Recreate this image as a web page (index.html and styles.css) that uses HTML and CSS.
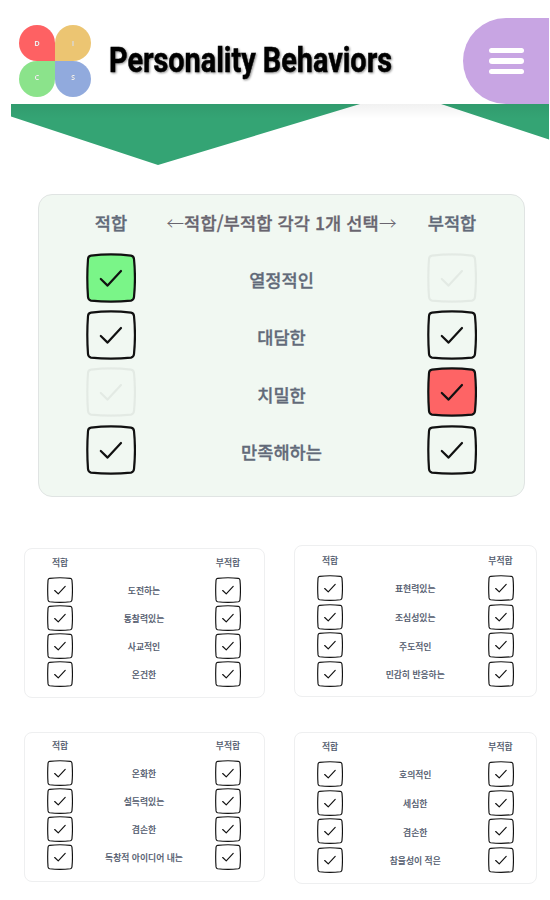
FILE: index.html
```html
<!DOCTYPE html>
<html lang="ko">
<head>
<meta charset="utf-8">
<title>Personality Behaviors</title>
<link rel="stylesheet" href="styles.css">
</head>
<body>
<svg class="defs" width="0" height="0" aria-hidden="true">
  <symbol id="box" viewBox="0 0 50 50">
    <path class="frame" d="M5 2.7Q25 .2 45 2.7Q47.6 3 48 6Q49.9 25 48 44Q47.7 47 45 47.6Q25 49.8 5 47.6Q2.3 47 2 44Q.6 25 2 6Q2.3 3 5 2.7Z"/>
    <path class="tick" d="M14.8 26L21.6 32.6L35 18"/>
  </symbol>
</svg>
<header class="header">
  <svg class="logo" viewBox="0 0 72 72">
    <path fill="#fe6163" d="M36 36H18A18 18 0 1 1 36 18Z"/>
    <path fill="#ecc572" d="M36 36V18A18 18 0 1 1 54 36Z"/>
    <path fill="#8be38b" d="M36 36V54A18 18 0 1 1 18 36Z"/>
    <path fill="#91aadd" d="M36 36H54A18 18 0 1 1 36 54Z"/>
    <g class="letters"><text x="18" y="21.2">D</text><text x="54" y="21.2">I</text><text x="18" y="55">C</text><text x="54" y="55">S</text></g>
  </svg>
  <svg class="title" viewBox="0 0 290 50"><text x="1" y="33" textLength="283" lengthAdjust="spacingAndGlyphs">Personality Behaviors</text></svg>
  <button class="menu" aria-label="Menu"><i></i><i></i><i></i></button>
</header>
<svg class="banner" viewBox="0 0 538 62">
  <defs><linearGradient id="fade" x2="0" y2="1"><stop stop-color="#000" stop-opacity=".055"/><stop offset="1" stop-color="#000" stop-opacity="0"/></linearGradient></defs>
  <path fill="#34a474" d="M0 0H349L147 61L0 12.5ZM430 0H538V35.5Z"/>
  <path fill="url(#fade)" d="M0 0H538V15H0Z"/>
</svg>
<main>
  <section class="card main">
    <div class="row head"><b>적합</b><b class="hint"><span class="arrow">←</span>적합/부적합 각각 1개 선택<span class="arrow">→</span></b><b>부적합</b></div>
    <div class="row"><svg class="box yes"><use href="#box"/></svg><b>열정적인</b><svg class="box off"><use href="#box"/></svg></div>
    <div class="row"><svg class="box"><use href="#box"/></svg><b>대담한</b><svg class="box"><use href="#box"/></svg></div>
    <div class="row"><svg class="box off"><use href="#box"/></svg><b>치밀한</b><svg class="box no"><use href="#box"/></svg></div>
    <div class="row"><svg class="box"><use href="#box"/></svg><b>만족해하는</b><svg class="box"><use href="#box"/></svg></div>
  </section>
  <div class="minis">
    <div class="column left">
      <section class="card mini">
        <div class="row head"><b>적합</b><b></b><b>부적합</b></div>
        <div class="row"><svg class="box"><use href="#box"/></svg><b>도전하는</b><svg class="box"><use href="#box"/></svg></div>
        <div class="row"><svg class="box"><use href="#box"/></svg><b>통찰력있는</b><svg class="box"><use href="#box"/></svg></div>
        <div class="row"><svg class="box"><use href="#box"/></svg><b>사교적인</b><svg class="box"><use href="#box"/></svg></div>
        <div class="row"><svg class="box"><use href="#box"/></svg><b>온건한</b><svg class="box"><use href="#box"/></svg></div>
      </section>
      <section class="card mini">
        <div class="row head"><b>적합</b><b></b><b>부적합</b></div>
        <div class="row"><svg class="box"><use href="#box"/></svg><b>온화한</b><svg class="box"><use href="#box"/></svg></div>
        <div class="row"><svg class="box"><use href="#box"/></svg><b>설득력있는</b><svg class="box"><use href="#box"/></svg></div>
        <div class="row"><svg class="box"><use href="#box"/></svg><b>겸손한</b><svg class="box"><use href="#box"/></svg></div>
        <div class="row"><svg class="box"><use href="#box"/></svg><b>독창적 아이디어 내는</b><svg class="box"><use href="#box"/></svg></div>
      </section>
    </div>
    <div class="column right">
      <section class="card mini">
        <div class="row head"><b>적합</b><b></b><b>부적합</b></div>
        <div class="row"><svg class="box"><use href="#box"/></svg><b>표현력있는</b><svg class="box"><use href="#box"/></svg></div>
        <div class="row"><svg class="box"><use href="#box"/></svg><b>조심성있는</b><svg class="box"><use href="#box"/></svg></div>
        <div class="row"><svg class="box"><use href="#box"/></svg><b>주도적인</b><svg class="box"><use href="#box"/></svg></div>
        <div class="row"><svg class="box"><use href="#box"/></svg><b>민감히 반응하는</b><svg class="box"><use href="#box"/></svg></div>
      </section>
      <section class="card mini">
        <div class="row head"><b>적합</b><b></b><b>부적합</b></div>
        <div class="row"><svg class="box"><use href="#box"/></svg><b>호의적인</b><svg class="box"><use href="#box"/></svg></div>
        <div class="row"><svg class="box"><use href="#box"/></svg><b>세심한</b><svg class="box"><use href="#box"/></svg></div>
        <div class="row"><svg class="box"><use href="#box"/></svg><b>겸손한</b><svg class="box"><use href="#box"/></svg></div>
        <div class="row"><svg class="box"><use href="#box"/></svg><b>참을성이 적은</b><svg class="box"><use href="#box"/></svg></div>
      </section>
    </div>
  </div>
</main>
</body>
</html>
```
FILE: styles.css
```css
* { box-sizing: border-box; }
body {
  margin: 0;
  width: 550px;
  height: 900px;
  overflow: hidden;
  background: #fff;
  font-family: "Noto Sans CJK KR", sans-serif;
  color: #626a79;
}
svg { display: block; }
.defs { position: absolute; }

.header {
  display: flex;
  align-items: flex-start;
  height: 104px;
  padding: 18px 1.5px 0 18.5px;
}
.logo { width: 72px; height: 72px; margin-top: 7px; flex: none; }
.letters {
  font: 700 7.5px "Open Sans", sans-serif;
  fill: #fff;
  fill-opacity: .9;
  text-anchor: middle;
  filter: drop-shadow(.6px .6px .4px rgba(0, 0, 0, .4));
}
.title { width: 290px; height: 50px; margin: 21px 0 0 17.5px; flex: none; overflow: visible; }
.title text {
  font: 700 35px Roboto, sans-serif;
  fill: #000;
  stroke: #000;
  stroke-width: .5px;
  filter: drop-shadow(1px 1px 1px rgba(0, 0, 0, .45));
}
.menu {
  display: flex;
  flex-direction: column;
  justify-content: center;
  gap: 5px;
  width: 86px;
  height: 86px;
  margin-left: auto;
  padding: 0 0 0 26px;
  border: 0;
  border-radius: 43px 0 0 43px;
  background: #c8a5e3;
}
.menu i { width: 35px; height: 5.5px; border-radius: 3px; background: #fff; }
.banner { width: 538px; height: 62px; margin-left: 11px; }

.card {
  display: flex;
  flex-direction: column;
  border: 1px solid #eeeff0;
  background: #fff;
}
.row {
  display: grid;
  align-items: center;
  justify-items: center;
  white-space: nowrap;
}
.row b { font-weight: 500; line-height: 1; -webkit-text-stroke: .3px currentColor; }
.box { overflow: visible; }
.frame { fill: var(--fill, none); stroke: #111; stroke-width: 2.2px; }
.tick { fill: none; stroke: #111; stroke-width: 2.2px; stroke-linecap: round; stroke-linejoin: round; }
.yes { --fill: #7af588; }
.no { --fill: #fe6465; }
.off { opacity: .055; }

.main {
  width: 487px;
  height: 303px;
  margin: 28px 0 0 38px;
  padding-top: 12px;
  border: 1.5px solid #e0e4e3;
  border-radius: 14px;
  background: #f1f8f2;
  font-size: 17.6px;
}
.main .row { grid-template-columns: 144px minmax(0, 1fr) 144px; height: 57.2px; }
.main .head { height: 32px; margin-bottom: 10.5px; }
.main .box { width: 50px; height: 50px; }
.main .row:not(.head) b { padding-top: 4px; }
.row .hint { color: #69656f; justify-self: center; letter-spacing: .08px; }
.arrow { font-weight: 300; -webkit-text-stroke: 0; }

.minis { display: flex; }
.column { display: flex; flex-direction: column; }
.left { width: 241px; margin: 50.5px 0 0 23.5px; gap: 34px; --pitch: 28.2px; }
.right { width: 243.5px; margin: 48px 0 0 29px; gap: 34.5px; --pitch: 28.75px; }
.mini { height: 150px; padding-top: 4px; border-radius: 8px; font-size: 8.8px; color: #4f586b; }
.right .mini { height: 152px; }
.mini .row { grid-template-columns: 71px minmax(0, 1fr) 71px; height: var(--pitch); }
.mini .head { height: 22px; margin-bottom: 1.2px; }
.left .mini:last-child { padding-top: 3px; }
.right .mini:last-child { padding-top: 3.5px; }
.right .mini .head { margin-bottom: 1.6px; }
.mini .box { width: 26px; height: 26px; }
.mini .row:not(.head) b { padding-top: 3px; }
.mini .row b { -webkit-text-stroke-width: .15px; }
.mini .frame, .mini .tick { stroke: #222; }
.mini .tick { stroke-width: 2.8px; }
```
